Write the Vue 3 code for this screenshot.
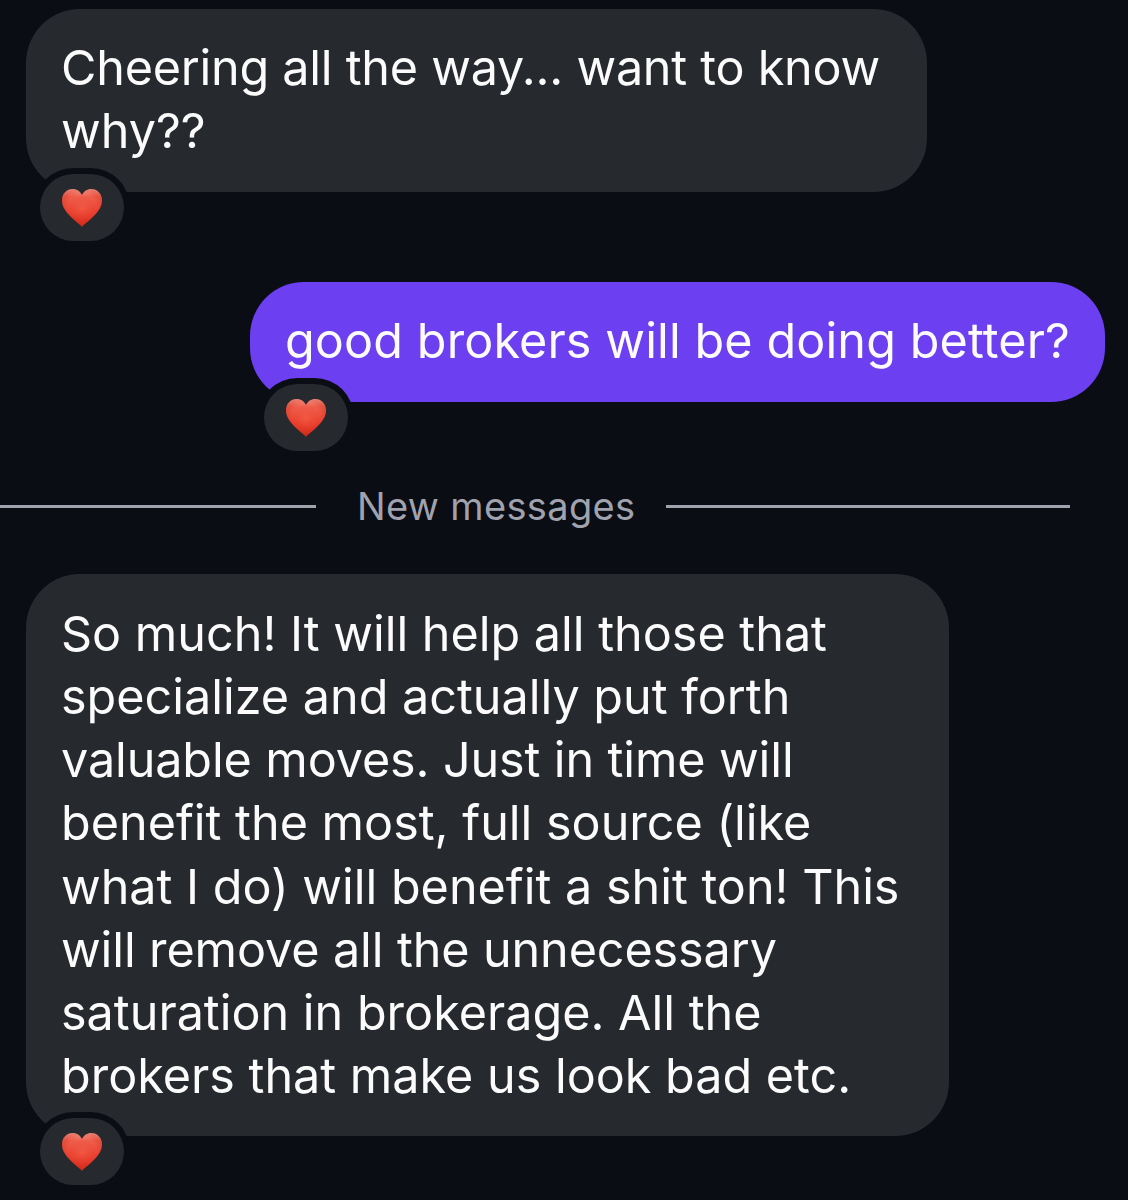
<script setup>
const lines1 = [
  { t: 'Cheering all the way... want to know', ls: -0.24 },
  { t: 'why??', ls: 0 }
]
const lines3 = [
  { t: 'So much! It will help all those that', ls: 0 },
  { t: 'specialize and actually put forth', ls: 0 },
  { t: 'valuable moves. Just in time will', ls: -0.11 },
  { t: 'benefit the most, full source (like', ls: 0 },
  { t: 'what I do) will benefit a shit ton! This', ls: 0 },
  { t: 'will remove all the unnecessary', ls: -0.1 },
  { t: 'saturation in brokerage. All the', ls: 0 },
  { t: 'brokers that make us look bad etc.', ls: 0 }
]
const heartPath = 'M20 38C17 33.500 0 24 0 11.500C0 4.500 5 0 10.800 0C14.800 0 18.200 2.300 20 6C21.800 2.300 25.200 0 29.200 0C35 0 40 4.500 40 11.500C40 24 23 33.500 20 38Z'
</script>

<template>
  <main class="thread">
    <svg class="defs" width="0" height="0" aria-hidden="true">
      <defs>
        <linearGradient id="heartBase" x1="0" y1="0" x2="0" y2="1">
          <stop offset="0" stop-color="#f8a79a" />
          <stop offset="0.2" stop-color="#f06350" />
          <stop offset="0.6" stop-color="#ea3f2d" />
          <stop offset="1" stop-color="#cf2413" />
        </linearGradient>
        <radialGradient id="heartGlow" cx="0.5" cy="0.5" r="0.5">
          <stop offset="0" stop-color="#f4604c" stop-opacity="0.7" />
          <stop offset="0.7" stop-color="#ec4a38" stop-opacity="0.15" />
          <stop offset="1" stop-color="#c92413" stop-opacity="0.3" />
        </radialGradient>
      </defs>
    </svg>

    <section class="bubble incoming first">
      <div v-for="l in lines1" :key="l.t" class="line" :style="{ letterSpacing: l.ls + 'px' }">{{ l.t }}</div>
      <span class="reaction">
        <svg class="heart" viewBox="0 0 40 38"><path :d="heartPath" fill="url(#heartBase)" /><path :d="heartPath" fill="url(#heartGlow)" /></svg>
      </span>
    </section>

    <section class="bubble outgoing">
      <div class="line" :style="{ letterSpacing: '0.12px' }">good brokers will be doing better?</div>
      <span class="reaction">
        <svg class="heart" viewBox="0 0 40 38"><path :d="heartPath" fill="url(#heartBase)" /><path :d="heartPath" fill="url(#heartGlow)" /></svg>
      </span>
    </section>

    <div class="divider">
      <span class="rule left"></span>
      <span class="label">New messages</span>
      <span class="rule right"></span>
    </div>

    <section class="bubble incoming third">
      <div v-for="l in lines3" :key="l.t" class="line" :style="{ letterSpacing: l.ls + 'px' }">{{ l.t }}</div>
      <span class="reaction">
        <svg class="heart" viewBox="0 0 40 38"><path :d="heartPath" fill="url(#heartBase)" /><path :d="heartPath" fill="url(#heartGlow)" /></svg>
      </span>
    </section>
  </main>
</template>

<style scoped>
.thread {
  width: 1128px;
  height: 1200px;
  box-sizing: border-box;
  padding-top: 9px;
  overflow: hidden;
  background: #0a0d13;
  font-family: Inter, "Liberation Sans", sans-serif;
  display: flex;
  flex-direction: column;
}
.defs { position: absolute; }
.bubble {
  position: relative;
  box-sizing: border-box;
  padding: 27px 35px 28px;
  border-radius: 54px;
  color: #fbfbfc;
  font-size: 48.5px;
  line-height: 63px;
  white-space: nowrap;
}
.incoming { background: #26292e; margin-left: 26px; }
.first { width: 901px; height: 183px; }
.third { width: 923px; height: 562px; padding-top: 28px; line-height: 63.15px; }
.outgoing {
  background: #6c3ff0;
  width: 855px;
  height: 120px;
  margin-top: 90px;
  margin-left: 250px;
}
.reaction {
  position: absolute;
  left: 14px;
  bottom: -49px;
  width: 84px;
  height: 67px;
  border-radius: 34px;
  background: #26292e;
  box-shadow: 0 0 0 6px #0a0d13;
  display: flex;
  align-items: center;
  justify-content: center;
}
.heart { width: 40px; height: 38px; display: block; }
.divider {
  display: flex;
  align-items: center;
  box-sizing: border-box;
  height: 172px;
  padding-top: 36px;
}
.rule { height: 3px; background: #a0a3ad; display: block; }
.left { width: 316px; }
.right { width: 404px; }
.label {
  margin: 0 30px 0 42px;
  width: 278px;
  font-size: 38px;
  letter-spacing: 0.35px;
  color: #a0a3ae;
  white-space: nowrap;
  transform: translateX(-1px);
}
</style>

<style>
html, body { background: #0a0d13; }
</style>
